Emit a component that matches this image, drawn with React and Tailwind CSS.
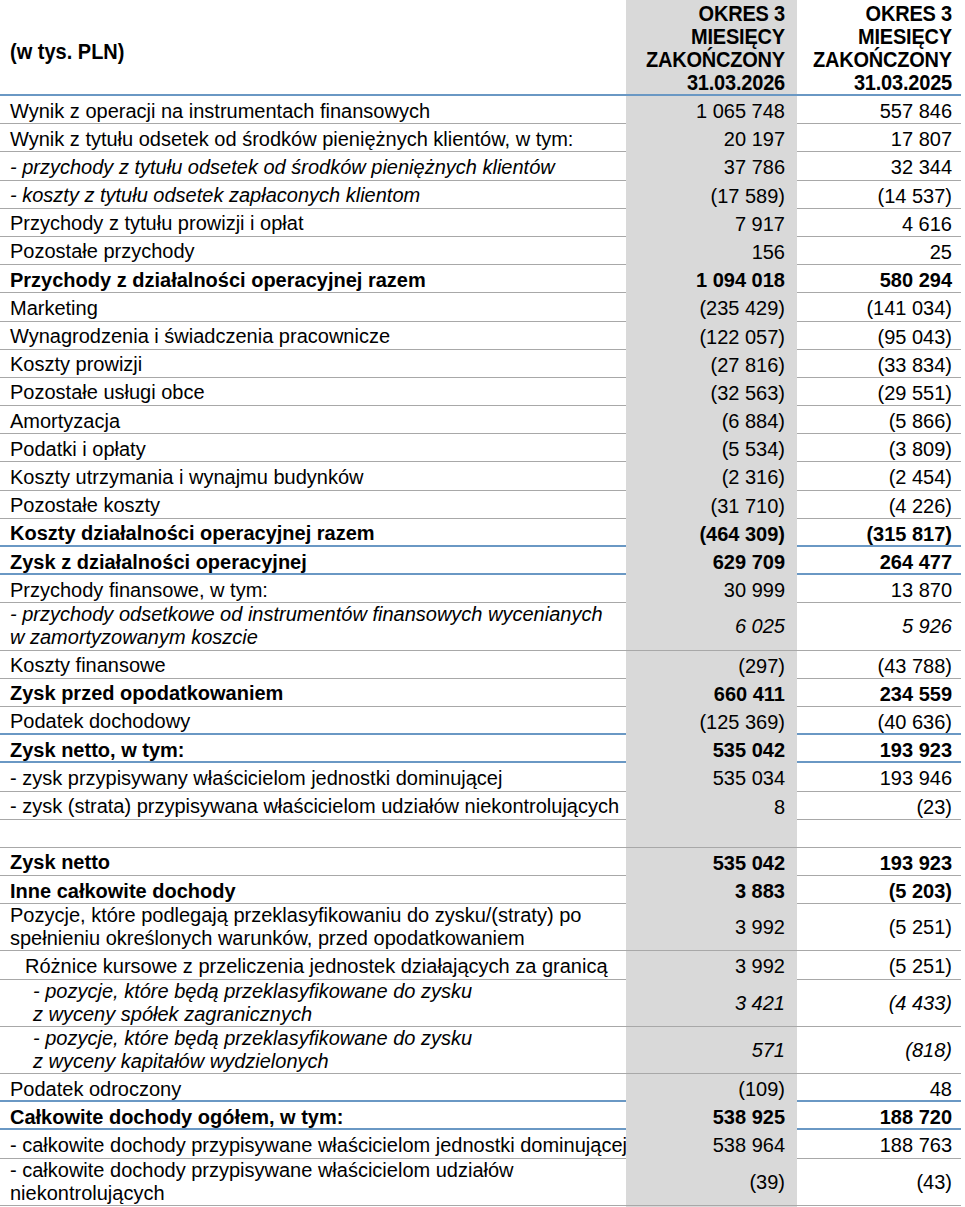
import React from "react";

const rows = [
  { l: "Wynik z operacji na instrumentach finansowych", a: "1 065 748", b: "557 846" },
  { l: "Wynik z tytułu odsetek od środków pieniężnych klientów, w tym:", a: "20 197", b: "17 807" },
  { l: "- przychody z tytułu odsetek od środków pieniężnych klientów", a: "37 786", b: "32 344", it: true },
  { l: "- koszty z tytułu odsetek zapłaconych klientom", a: "(17 589)", b: "(14 537)", it: true },
  { l: "Przychody z tytułu prowizji i opłat", a: "7 917", b: "4 616" },
  { l: "Pozostałe przychody", a: "156", b: "25" },
  { l: "Przychody z działalności operacyjnej razem", a: "1 094 018", b: "580 294", bold: true },
  { l: "Marketing", a: "(235 429)", b: "(141 034)" },
  { l: "Wynagrodzenia i świadczenia pracownicze", a: "(122 057)", b: "(95 043)" },
  { l: "Koszty prowizji", a: "(27 816)", b: "(33 834)" },
  { l: "Pozostałe usługi obce", a: "(32 563)", b: "(29 551)" },
  { l: "Amortyzacja", a: "(6 884)", b: "(5 866)" },
  { l: "Podatki i opłaty", a: "(5 534)", b: "(3 809)" },
  { l: "Koszty utrzymania i wynajmu budynków", a: "(2 316)", b: "(2 454)" },
  { l: "Pozostałe koszty", a: "(31 710)", b: "(4 226)" },
  { l: "Koszty działalności operacyjnej razem", a: "(464 309)", b: "(315 817)", bold: true, blue: true },
  { l: "Zysk z działalności operacyjnej", a: "629 709", b: "264 477", bold: true, blue: true },
  { l: "Przychody finansowe, w tym:", a: "30 999", b: "13 870" },
  { l: ["- przychody odsetkowe od instrumentów finansowych wycenianych", "w zamortyzowanym koszcie"], a: "6 025", b: "5 926", it: true, numIt: true },
  { l: "Koszty finansowe", a: "(297)", b: "(43 788)" },
  { l: "Zysk przed opodatkowaniem", a: "660 411", b: "234 559", bold: true },
  { l: "Podatek dochodowy", a: "(125 369)", b: "(40 636)", blue: true },
  { l: "Zysk netto, w tym:", a: "535 042", b: "193 923", bold: true, blue: true },
  { l: "- zysk przypisywany właścicielom jednostki dominującej", a: "535 034", b: "193 946" },
  { l: "- zysk (strata) przypisywana właścicielom udziałów niekontrolujących", a: "8", b: "(23)" },
  { l: "", a: "", b: "" },
  { l: "Zysk netto", a: "535 042", b: "193 923", bold: true },
  { l: "Inne całkowite dochody", a: "3 883", b: "(5 203)", bold: true },
  { l: ["Pozycje, które podlegają przeklasyfikowaniu do zysku/(straty) po", "spełnieniu określonych warunków, przed opodatkowaniem"], a: "3 992", b: "(5 251)" },
  { l: "Różnice kursowe z przeliczenia jednostek działających za granicą", a: "3 992", b: "(5 251)", indent: "pl-[25px]" },
  { l: ["- pozycje, które będą przeklasyfikowane do zysku", "z wyceny spółek zagranicznych"], a: "3 421", b: "(4 433)", it: true, numIt: true, indent: "pl-[33px]" },
  { l: ["- pozycje, które będą przeklasyfikowane do zysku", "z wyceny kapitałów wydzielonych"], a: "571", b: "(818)", it: true, numIt: true, indent: "pl-[33px]" },
  { l: "Podatek odroczony", a: "(109)", b: "48", blue: true },
  { l: "Całkowite dochody ogółem, w tym:", a: "538 925", b: "188 720", bold: true, blue: true },
  { l: "- całkowite dochody przypisywane właścicielom jednostki dominującej", a: "538 964", b: "188 763" },
  { l: ["- całkowite dochody przypisywane właścicielom udziałów", "niekontrolujących"], a: "(39)", b: "(43)" },
];

function Row({ r }) {
  const two = Array.isArray(r.l);
  const h = two ? "h-[47.2px]" : "h-[28.2px]";
  const border = r.blue ? "border-b-2 border-[#6a98c4]" : "border-b border-[#a8a8a8]";
  const weight = r.bold ? "font-bold" : "font-normal";
  const lblStyle = r.it ? "italic" : "";
  const numStyle = r.numIt ? "italic" : "";
  return (
    <div className={`grid grid-cols-[626px_171px_164px] ${h} ${border} ${weight}`}>
      <div className={`flex flex-col justify-center whitespace-nowrap leading-[23px] ${r.indent || "pl-[10px]"} ${lblStyle}`}>
        {two ? (
          <>
            <span>{r.l[0]}</span>
            <span>{r.l[1]}</span>
          </>
        ) : (
          <span>{r.l}</span>
        )}
      </div>
      <div className={`bg-[#d9d9d9] flex items-center justify-end pr-[12px] ${numStyle}`}>{r.a}</div>
      <div className={`flex items-center justify-end pr-[9px] ${numStyle}`}>{r.b}</div>
    </div>
  );
}

function HeadCol({ date, gray, pr }) {
  return (
    <div className={`${gray ? "bg-[#d9d9d9]" : ""} flex flex-col items-end justify-end ${pr} pb-0 leading-[23px] text-right text-[20px] tracking-[-0.2px]`}>
      <span className="scale-y-[1.12]">OKRES 3</span>
      <span className="scale-y-[1.12]">MIESIĘCY</span>
      <span className="scale-y-[1.12]">ZAKOŃCZONY</span>
      <span className="scale-y-[1.12]">{date}</span>
    </div>
  );
}

export default function App() {
  return (
    <div className="w-[965px] h-[1207px] overflow-hidden bg-white text-black text-[20px] font-['Liberation_Sans',Arial,sans-serif]">
      <div className="w-[961px]">
        <div className="grid grid-cols-[626px_171px_164px] h-[96px] border-b-2 border-[#6a98c4] font-bold">
          <div className="flex items-center pl-[10px] pt-[8px] text-[20px]">
            <span className="scale-y-[1.12]">(w tys. PLN)</span>
          </div>
          <HeadCol date="31.03.2026" gray pr="pr-[12px]" />
          <HeadCol date="31.03.2025" pr="pr-[9px]" />
        </div>
        {rows.map((r, i) => (
          <Row key={i} r={r} />
        ))}
        <div className="grid grid-cols-[626px_171px_164px] h-[20px]">
          <div />
          <div className="bg-[#d9d9d9]" />
          <div />
        </div>
      </div>
    </div>
  );
}
